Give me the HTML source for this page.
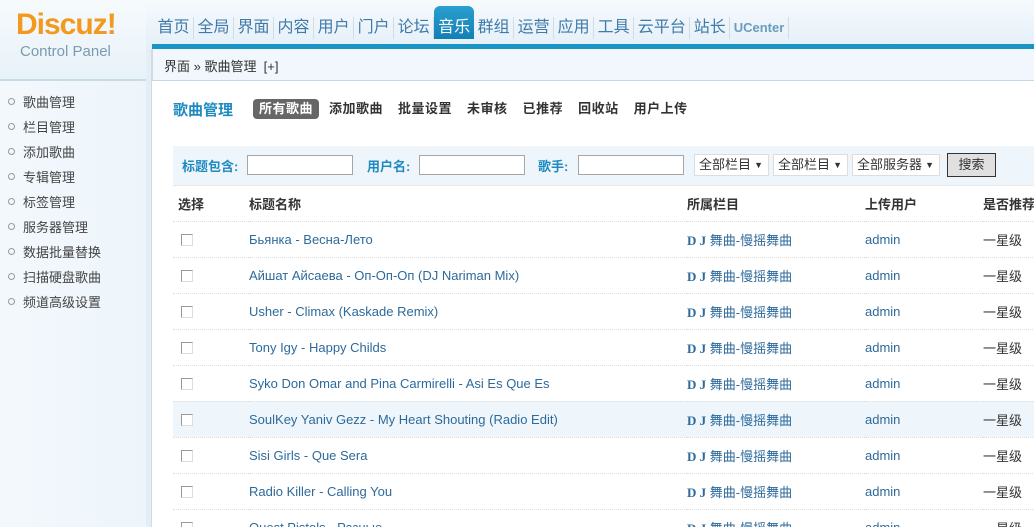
<!DOCTYPE html>
<html><head><meta charset="utf-8"><style>
*{margin:0;padding:0;box-sizing:border-box}
html,body{width:1034px;height:527px;overflow:hidden}
body{background:#fff;font-family:"Liberation Sans","Noto Sans CJK SC",sans-serif;font-size:13px;color:#333;position:relative}
.hdr{position:absolute;left:0;top:0;width:1034px;height:49px;background:linear-gradient(#f6fafd,#e4eff8)}
.side{position:absolute;left:0;top:49px;width:152px;height:478px;background:linear-gradient(90deg,#f3f8fc 0,#edf5fb 146px,#e3eef7 146px,#e3eef7 151px,#cfdce8 151px)}
.sidehead{position:absolute;left:0;top:0;width:146px;height:81px;border-bottom:2px solid #c8dae8;background:linear-gradient(#f6fafd,#e8f2f9)}
.logo{position:absolute;left:16px;top:8px;font:bold 30px "Liberation Sans",sans-serif;color:#f39a1e;letter-spacing:-1px}
.cp{position:absolute;left:20px;top:43px;font-size:15px;color:#7a9bb0}
.nav{position:absolute;left:154px;top:17px;height:22px;display:flex;font-size:16px;color:#3f7aa8}
.nav span{padding:0 3.5px;border-right:1px solid #cfdde9;line-height:22px}
.nav span.act{background:linear-gradient(#2a9fd0,#1380b5);color:#fff;border-radius:6px 6px 0 0;margin-top:-11px;padding:11px 4px 0 4px;border:none;height:33px}
.bar{position:absolute;left:152px;top:44px;width:882px;height:5px;background:#1994c4}
.crumb{position:absolute;left:152px;top:49px;width:882px;height:32px;background:#f1f7fc;border-left:1px solid #cfdce8;border-bottom:1px solid #c6d9e7;font-size:13px;line-height:36px;padding-left:11px;color:#333}
.menu{position:absolute;left:8px;top:92px;font-size:13px;color:#444}
.menu div{height:25px;line-height:22px}
.menu div:before{content:"";display:inline-block;width:5px;height:5px;border:1px solid #999;border-radius:50%;margin-right:8px;vertical-align:2px}
.title{position:absolute;left:173px;top:99px;font-size:15px;font-weight:bold;color:#1e8ac0}
.tabs{position:absolute;left:253px;top:99px;display:flex;font-size:13px;font-weight:bold;color:#333;letter-spacing:0.5px}
.tabs span{margin-right:15px;line-height:20px}
.tabs span.on{background:#666;color:#fff;border-radius:4px;padding:0 6px;margin-right:10px}
.search{position:absolute;left:173px;top:146px;width:861px;height:40px;background:#eef5fb;border-bottom:1px dotted #ddd}
.search .l{position:absolute;top:10px;font-weight:bold;color:#1e8ac0;font-size:13px}
.search .i{position:absolute;top:9px;height:20px;border:1px solid #a6a6a6;background:#fff}
.search .s{position:absolute;top:8px;height:22px;border:1px solid #ddd;background:#fff;font-size:13px;line-height:20px;padding-left:4px}
.search .s:after{content:"▼";position:absolute;right:5px;font-size:9px}
.btn{position:absolute;left:774px;top:7px;width:49px;height:24px;border:1px solid #333;background:#e0e0e0;text-align:center;line-height:22px}
table{position:absolute;left:173px;top:186px;border-collapse:collapse;width:880px}
td{height:36px;border-bottom:1px dotted #ddd;font-size:13px;color:#2d6a9b;white-space:nowrap;padding:0}
tr.h td{color:#333;font-weight:bold;height:35px}
td.c{width:76px;padding-left:8px}
td.t{width:438px}
td.g{width:178px}
td.u{width:118px}
td.r{color:#333}
.cb{display:inline-block;width:12px;height:12px;border:1px solid #999;border-right-color:#ddd;border-bottom-color:#ddd;background:#fff;vertical-align:middle}
tr.hl td{background:#eef6fb}
.dj{font-family:"Liberation Serif",serif;font-weight:bold}
</style></head><body>
<div class="hdr"></div>
<div class="side"></div>
<div class="sidehead"></div>
<div class="logo">Discuz!</div>
<div class="cp">Control Panel</div>
<div class="nav"><span>首页</span><span>全局</span><span>界面</span><span>内容</span><span>用户</span><span>门户</span><span>论坛</span><span class="act">音乐</span><span>群组</span><span>运营</span><span>应用</span><span>工具</span><span>云平台</span><span>站长</span><span style="font-size:13px;font-weight:bold;color:#6a9cbf">UCenter</span></div>
<div class="bar"></div>
<div class="crumb">界面 » 歌曲管理 &nbsp;[+]</div>
<div class="menu"><div>歌曲管理</div><div>栏目管理</div><div>添加歌曲</div><div>专辑管理</div><div>标签管理</div><div>服务器管理</div><div>数据批量替换</div><div>扫描硬盘歌曲</div><div>频道高级设置</div></div>
<div class="title">歌曲管理</div>
<div class="tabs"><span class="on">所有歌曲</span><span>添加歌曲</span><span>批量设置</span><span>未审核</span><span>已推荐</span><span>回收站</span><span>用户上传</span></div>
<div class="search">
<span class="l" style="left:9px">标题包含:</span><span class="i" style="left:74px;width:106px"></span>
<span class="l" style="left:194px">用户名:</span><span class="i" style="left:246px;width:106px"></span>
<span class="l" style="left:365px">歌手:</span><span class="i" style="left:405px;width:106px"></span>
<span class="s" style="left:521px;width:75px">全部栏目</span>
<span class="s" style="left:600px;width:75px">全部栏目</span>
<span class="s" style="left:679px;width:88px">全部服务器</span>
<span class="btn">搜索</span>
</div>
<table>
<tr class="h"><td class="c" style="padding-left:5px">选择</td><td class="t">标题名称</td><td class="g">所属栏目</td><td class="u">上传用户</td><td>是否推荐</td></tr>
<tr><td class="c"><span class="cb"></span></td><td class="t">Бьянка - Весна-Лето</td><td class="g"><span class="dj">D J</span> 舞曲-慢摇舞曲</td><td class="u">admin</td><td class="r">一星级</td></tr>
<tr><td class="c"><span class="cb"></span></td><td class="t">Айшат Айсаева - Оп-Оп-Оп (DJ Nariman Mix)</td><td class="g"><span class="dj">D J</span> 舞曲-慢摇舞曲</td><td class="u">admin</td><td class="r">一星级</td></tr>
<tr><td class="c"><span class="cb"></span></td><td class="t">Usher - Climax (Kaskade Remix)</td><td class="g"><span class="dj">D J</span> 舞曲-慢摇舞曲</td><td class="u">admin</td><td class="r">一星级</td></tr>
<tr><td class="c"><span class="cb"></span></td><td class="t">Tony Igy - Happy Childs</td><td class="g"><span class="dj">D J</span> 舞曲-慢摇舞曲</td><td class="u">admin</td><td class="r">一星级</td></tr>
<tr><td class="c"><span class="cb"></span></td><td class="t">Syko Don Omar and Pina Carmirelli - Asi Es Que Es</td><td class="g"><span class="dj">D J</span> 舞曲-慢摇舞曲</td><td class="u">admin</td><td class="r">一星级</td></tr>
<tr class="hl"><td class="c"><span class="cb"></span></td><td class="t">SoulKey Yaniv Gezz - My Heart Shouting (Radio Edit)</td><td class="g"><span class="dj">D J</span> 舞曲-慢摇舞曲</td><td class="u">admin</td><td class="r">一星级</td></tr>
<tr><td class="c"><span class="cb"></span></td><td class="t">Sisi Girls - Que Sera</td><td class="g"><span class="dj">D J</span> 舞曲-慢摇舞曲</td><td class="u">admin</td><td class="r">一星级</td></tr>
<tr><td class="c"><span class="cb"></span></td><td class="t">Radio Killer - Calling You</td><td class="g"><span class="dj">D J</span> 舞曲-慢摇舞曲</td><td class="u">admin</td><td class="r">一星级</td></tr>
<tr><td class="c"><span class="cb"></span></td><td class="t">Quest Pistols - Разные</td><td class="g"><span class="dj">D J</span> 舞曲-慢摇舞曲</td><td class="u">admin</td><td class="r">一星级</td></tr>
</table>
</body></html>
